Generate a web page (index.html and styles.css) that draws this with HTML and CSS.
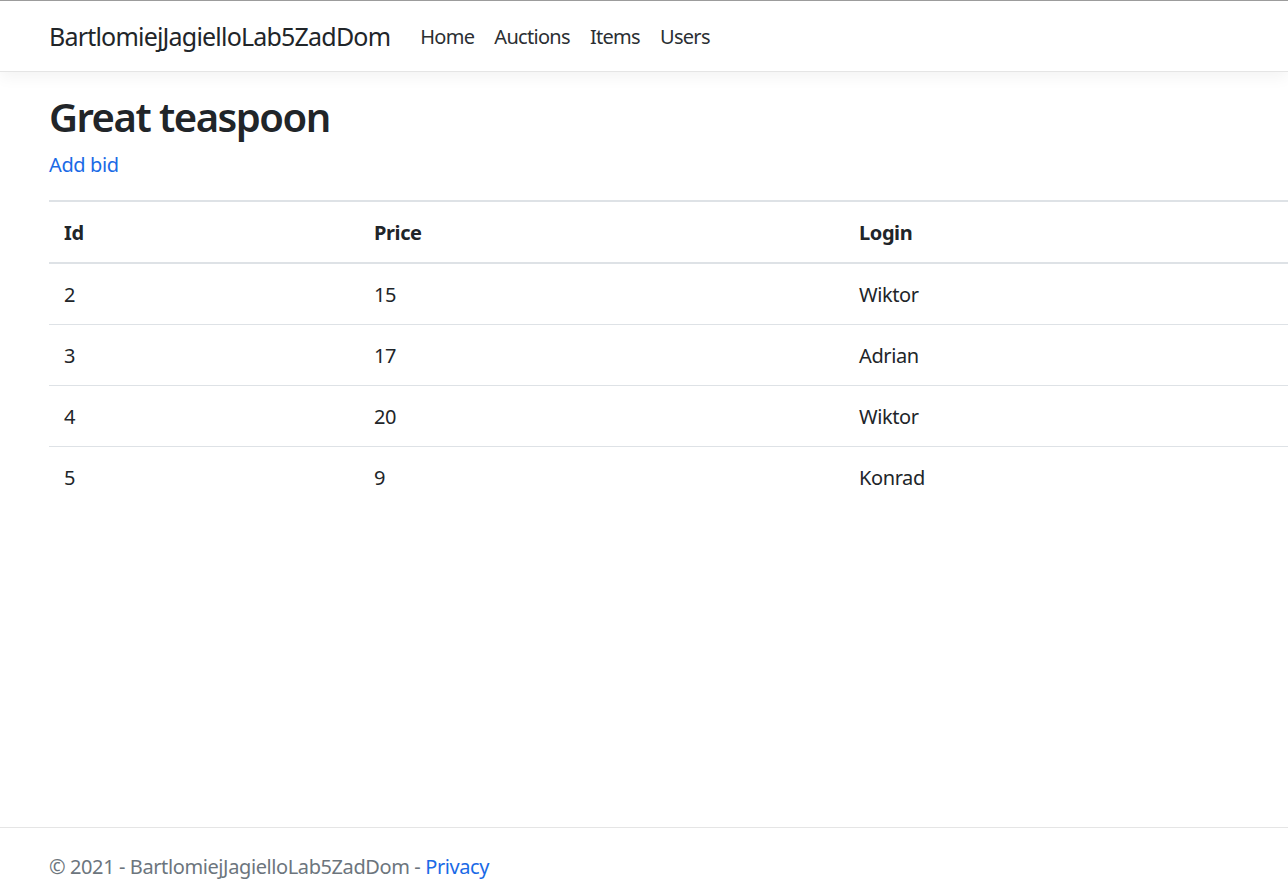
FILE: index.html
```html
<!DOCTYPE html>
<html lang="en">
<head>
<meta charset="utf-8">
<title>Great teaspoon - BartlomiejJagielloLab5ZadDom</title>
<link rel="stylesheet" href="styles.css">
</head>
<body>
<header class="site-header">
  <nav class="navbar">
    <a class="navbar-brand" href="#">BartlomiejJagielloLab5ZadDom</a>
    <ul class="nav-list">
      <li><a class="nav-link" href="#">Home</a></li>
      <li><a class="nav-link" href="#">Auctions</a></li>
      <li><a class="nav-link" href="#">Items</a></li>
      <li><a class="nav-link" href="#">Users</a></li>
    </ul>
  </nav>
</header>
<main class="main">
  <h1 class="title">Great teaspoon</h1>
  <p class="actions"><a class="link" href="#">Add bid</a></p>
  <table class="table">
    <colgroup>
      <col class="col-id">
      <col class="col-price">
      <col class="col-login">
    </colgroup>
    <thead>
      <tr><th>Id</th><th>Price</th><th>Login</th></tr>
    </thead>
    <tbody>
      <tr><td>2</td><td>15</td><td>Wiktor</td></tr>
      <tr><td>3</td><td>17</td><td>Adrian</td></tr>
      <tr><td>4</td><td>20</td><td>Wiktor</td></tr>
      <tr><td>5</td><td>9</td><td>Konrad</td></tr>
    </tbody>
  </table>
</main>
<footer class="footer">
  &copy; 2021 - BartlomiejJagielloLab5ZadDom - <a class="link" href="#">Privacy</a>
</footer>
</body>
</html>
```
FILE: styles.css
```css
html, body {
  margin: 0;
  padding: 0;
  height: 100%;
}
body {
  display: flex;
  flex-direction: column;
  overflow: hidden;
  font-family: "Noto Sans", "Open Sans", sans-serif;
  font-size: 20px;
  line-height: 30px;
  letter-spacing: -0.4px;
  color: #212529;
  background: #fff;
}
a { text-decoration: none; }
.link { color: #1a6ae6; }

.site-header { flex: none; position: relative; z-index: 1; }
.navbar {
  height: 70px;
  border-top: 1px solid #9c9c9c;
  border-bottom: 1px solid #e5e5e5;
  box-shadow: 0 5px 15px rgba(0,0,0,.05);
  display: flex;
  align-items: center;
  padding-left: 49px;
  background: #fff;
}
.navbar-brand {
  font-size: 25px;
  line-height: 37.5px;
  letter-spacing: -0.8px;
  color: #212529;
  margin-right: 20px;
  padding-top: 1px;
}
.nav-list {
  list-style: none;
  margin: 0;
  padding: 0;
  display: flex;
}
.nav-link {
  display: block;
  padding: 1px 10px 0;
  letter-spacing: -0.7px;
  color: #2b2f33;
}

.main {
  flex: 1;
  padding: 18px 0 0 49px;
}
.title {
  margin: 0 0 6px;
  font-size: 40px;
  line-height: 54px;
  font-weight: 600;
  letter-spacing: -1.5px;
}
.actions { margin: 0 0 20px; }

.table {
  width: 100%;
  table-layout: fixed;
  border-collapse: separate;
  border-spacing: 0;
}
.col-id { width: 310px; }
.col-price { width: 485px; }
.table th, .table td {
  text-align: left;
  padding: 16px 15px 14px;
  vertical-align: top;
}
.table th {
  font-weight: 700;
  border-top: 2px solid #dee2e6;
  border-bottom: 2px solid #dee2e6;
}
.table td { border-top: 1px solid #dee2e6; }
.table tbody tr:first-child td { border-top: 0; }

.footer {
  flex: none;
  height: 44px;
  border-top: 1px solid #e5e5e5;
  padding: 24px 0 0 49px;
  color: #6c757d;
}
```
